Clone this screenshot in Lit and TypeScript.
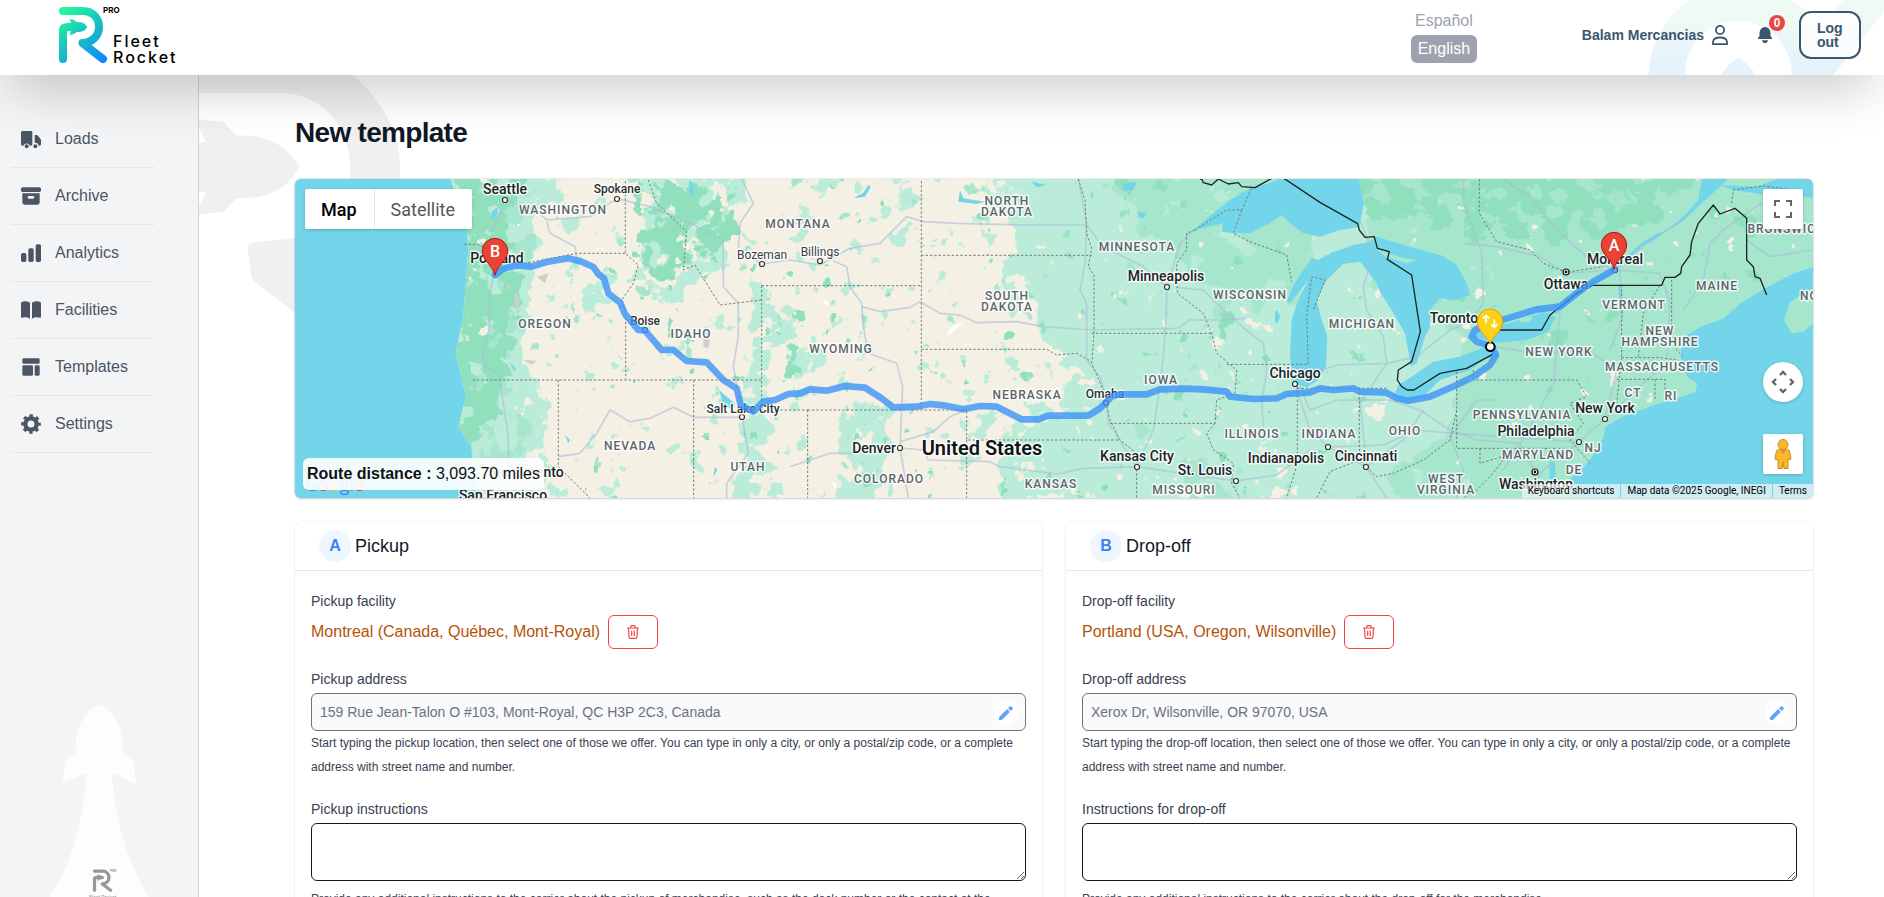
import { LitElement, html, css, svg } from "lit";
import { customElement, property } from "lit/decorators.js";

const logoMark = (fill: string) => svg`
  <g fill="none" stroke=${fill} stroke-width="24" stroke-linecap="round" stroke-linejoin="round">
    <path d="M189 33H248C280 33 297 56 297 81C297 109 274 129 247 129L309 177" />
    <path d="M189 177V90Q189 82 198 82H206" stroke-linecap="round" />
  </g>
  <path fill=${fill} d="M200 69H213L209 57L222 60L230 66C246 65 257 71 262 81C257 91 246 97 230 96L222 102L209 105L213 93H200Z" />`;

/* ---------- Map data: terrain units are thirds of a pixel ---------- */

type Label = [string, number, number, string];

const labels: Label[] = [
  ["Seattle", 645, 58, "city"],
  ["Spokane", 980, 57, "town"],
  ["WASHINGTON", 820, 120, "state"],
  ["Portland", 622, 265, "city"],
  ["OREGON", 765, 462, "state"],
  ["Boise", 1065, 453, "town"],
  ["IDAHO", 1203, 492, "state"],
  ["MONTANA", 1524, 162, "state"],
  ["Bozeman", 1416, 255, "minor"],
  ["Billings", 1590, 246, "minor"],
  ["WYOMING", 1652, 537, "state"],
  ["Salt Lake City", 1358, 717, "town"],
  ["NEVADA", 1019, 828, "state"],
  ["UTAH", 1373, 891, "state"],
  ["Sacramento", 707, 905, "city"],
  ["San Francisco", 640, 974, "city"],
  ["NORTH", 2150, 93, "state"],
  ["DAKOTA", 2150, 126, "state"],
  ["SOUTH", 2150, 378, "state"],
  ["DAKOTA", 2150, 411, "state"],
  ["NEBRASKA", 2212, 675, "state"],
  ["Denver", 1752, 834, "city"],
  ["COLORADO", 1797, 927, "state"],
  ["United States", 2075, 832, "country"],
  ["KANSAS", 2282, 942, "state"],
  ["MINNESOTA", 2541, 231, "state"],
  ["Minneapolis", 2628, 319, "city"],
  ["WISCONSIN", 2881, 375, "state"],
  ["IOWA", 2614, 630, "state"],
  ["Omaha", 2446, 671, "town"],
  ["Kansas City", 2541, 859, "city"],
  ["St. Louis", 2745, 901, "city"],
  ["MISSOURI", 2683, 960, "state"],
  ["ILLINOIS", 2887, 792, "state"],
  ["Chicago", 3015, 610, "city"],
  ["INDIANA", 3117, 792, "state"],
  ["Indianapolis", 2988, 865, "city"],
  ["MICHIGAN", 3215, 462, "state"],
  ["OHIO", 3344, 782, "state"],
  ["Cincinnati", 3229, 859, "city"],
  ["WEST", 3467, 927, "state"],
  ["VIRGINIA", 3467, 960, "state"],
  ["Toronto", 3491, 445, "city"],
  ["Ottawa", 3829, 343, "city"],
  ["Montreal", 3975, 268, "city"],
  ["NEW YORK", 3808, 546, "state"],
  ["VERMONT", 4032, 405, "state"],
  ["NEW", 4111, 483, "state"],
  ["HAMPSHIRE", 4110, 516, "state"],
  ["MASSACHUSETTS", 4117, 591, "state"],
  ["MAINE", 4280, 348, "state"],
  ["BRUNSWICK", 4487, 177, "state"],
  ["NOVA", 4585, 376, "state"],
  ["CT", 4028, 669, "state"],
  ["RI", 4142, 678, "state"],
  ["New York", 3945, 715, "city"],
  ["PENNSYLVANIA", 3697, 735, "state"],
  ["Philadelphia", 3739, 784, "city"],
  ["NJ", 3909, 834, "state"],
  ["MARYLAND", 3743, 855, "state"],
  ["DE", 3852, 900, "state"],
  ["Washington", 3737, 943, "city"],
];

const dots = [
  [645, 90], [980, 86], [1064, 479], [1416, 282], [1590, 273], [1357, 742], [1830, 834],
  [2631, 351], [2447, 698], [2541, 891], [2838, 933], [3015, 642], [3114, 831],
  [3228, 891], [3945, 747], [3867, 816], [3975, 300],
];
const capitals = [[3829, 307], [3736, 907]];

const fontSize: Record<string, number> = { city: 14, town: 12, minor: 12, state: 12, country: 20 };
const px = (v: number) => Math.round((v - 15) / 3);
const py = (v: number) => Math.round((v - 27) / 3);

const route =
  "M615 315L640 296L680 286L725 290L770 276L835 265L875 275L910 291L925 312L942 325L955 370L990 397L1005 432L1045 480L1065 482L1115 540L1150 540L1190 573L1250 577L1300 630L1340 655L1352 705L1390 725L1420 695L1455 690L1495 672L1530 670L1560 658L1610 662L1665 648L1725 653L1775 685L1810 712L1880 710L1920 702L1960 706L2020 718L2070 708L2120 710L2150 725L2195 748L2245 748L2275 737L2395 737L2430 715L2465 680L2490 673L2570 673L2610 658L2680 656L2740 658L2810 665L2820 680L2890 687L2960 685L2990 672L3060 667L3090 655L3130 660L3190 655L3210 665L3290 668L3320 685L3355 692L3420 680L3500 645L3550 620L3600 585L3618 555L3605 530L3560 515L3545 500L3555 480L3600 460L3660 443L3740 418L3810 410L3860 370L3910 335L3972 300";

const roads = [
  "M645 95L620 150L605 190L610 320L598 380L598 480L578 540L580 585L628 615L640 700L655 800L655 984",
  "M650 92L740 120L770 150L900 140L980 86L1080 110L1200 160L1300 210L1300 350L1345 400L1345 500L1330 590L1357 740L1375 850L1310 940L1310 984",
  "M770 155L780 190L855 230L860 265", "M1355 27L1390 100L1350 160L1345 240L1416 282L1500 270L1590 285L1680 235L1770 220L1850 140L1900 155L2000 160L2200 165L2390 165L2440 230L2560 290L2631 351",
  "M1630 273L1670 290L1680 350L1715 400L1720 470L1735 550L1820 580L1838 650L1830 834L1855 984",
  "M1715 410L1770 425L1860 412L1890 395L1950 430L2010 435L2060 458L2180 455L2260 470L2400 480L2660 475L2700 450L2800 450L2870 445",
  "M2365 27L2390 160L2385 280L2370 360L2390 400L2390 570L2430 620L2450 690L2455 760L2541 890L2640 905L2838 933L2960 915L3060 840",
  "M2631 355L2628 450L2620 560L2610 650L2590 780L2541 885", "M2660 352L2740 360L2800 420L2880 490L2920 520L2930 600L2915 700L2920 770",
  "M2640 320L2670 220L2710 180", "M805 860L870 850L920 790L960 720L1020 755L1080 745L1150 712L1210 742L1357 742",
  "M1830 834L1900 840L1915 870L2100 875L2130 890L2300 912L2380 895L2541 891", "M1500 890L1620 850L1690 850",
  "M1830 815L1930 785L1980 740L2040 715", "M3015 642L3060 780L3114 831L3228 891L3290 984", "M3114 831L3280 825L3380 780L3490 790L3640 800L3867 816",
  "M3030 650L3060 720L3140 690L3300 690L3390 720L3480 780L3560 810L3690 820L3736 907", "M3228 891L3340 810L3400 720",
  "M3210 150L3250 250L3220 350L3230 420L3280 500L3290 580L3210 700L3230 880", "M3080 605L3140 585L3290 580L3380 560L3480 480L3540 455",
  "M3540 455L3580 400L3575 250L3520 100L3520 27", "M3560 520L3700 545L3900 545L3980 600L3945 747", "M3990 300L3998 440L3960 540",
  "M3520 220L3620 230L3750 260L3829 310L3975 300", "M3975 300L4110 310L4140 400L4130 580L4060 640L3945 747L3867 816L3760 900L3700 984",
  "M3640 27L3720 80L3800 180L3900 270L3975 300L4080 210L4180 150", "M4180 420L4240 330L4260 220L4300 180L4400 110L4460 70",
  "M3810 420L3800 545L3790 640L3710 790L3640 900", "M3500 984L3520 900L3480 800L3560 690L3620 690",
  "M4370 210L4440 260L4569 240",
];

const stateLines = [
  "M523 223H565L680 285L860 250H1012", "M1006 33V250L1045 285L1030 340L995 390L1007 430V628", "M548 630H1415",
  "M805 630V890L900 984", "M1211 630V984", "M1415 347V720H1553M1415 347H1894", "M1553 720V984M1553 720H2030V810H2490M2030 810V984",
  "M1894 33V720", "M1894 256H2405", "M1894 538H2270L2300 555L2360 550L2405 575", "M1075 30L1100 100L1190 185L1180 300L1215 285L1290 405L1415 390",
  "M2365 27L2385 90L2390 190L2405 235L2395 290L2412 315V490L2405 580L2440 660L2460 750L2490 810L2540 850V984",
  "M2405 490H2770", "M2715 180L2690 190L2690 240L2660 280L2662 370L2740 430L2765 490L2780 550L2840 600L2835 670L2780 690L2775 760H2460",
  "M2715 180L2810 120H2855L2885 55", "M2855 120L2830 190L2880 215L2990 255L3005 335", "M2810 583H3055L3050 440L3065 320L3105 330L3070 420",
  "M2775 760L2750 790L2770 840L2830 880L2825 940L2850 984", "M3022 650V880L2990 984", "M3022 655H3290", "M3208 655V870L3120 905L3080 984",
  "M3500 605V835H3835", "M3500 720L3480 810L3400 870L3310 910L3260 920L3208 870", "M3550 600V630H3860L3890 680L3840 700L3880 760L3840 810L3900 880",
  "M3570 835V880L3700 840", "M3995 345V560L3980 700", "M3995 563H4110L4160 570", "M3980 628H4125V660M4095 628V690", "M4145 330V480L4160 540L4180 560M4045 560L4060 430L4110 345",
  "M3568 27V130L3620 215L3720 240L3760 280L3829 307L3940 290", "M4325 100L4330 60L4420 48L4510 60", "M3640 870L3600 920L3560 960L3520 984",
];

const border =
  "M2730 27H2735L2740 38L2765 45L2785 27L2815 42L2845 38L2855 50L2895 53L2965 14L3090 97L3203 161L3208 180L3225 202L3253 200L3262 235L3298 245L3292 268L3365 315L3391 485L3365 575L3325 600L3322 630L3335 650L3352 660H3372L3450 610L3530 595L3608 553M3630 480H3755L3780 435L3860 370L3905 346H4115L4125 322L4155 322L4172 310L4175 290L4200 255L4205 215L4225 160L4270 105L4290 132L4335 115L4370 145V270L4390 290L4395 320L4410 325L4430 375";

const westLand = "M483 27L500 90L530 170L536 230L528 330L520 440L497 550L512 610L528 680L505 770L545 830L548 920L580 984H3960L3840 984L3850 950L3840 925L3880 890L3905 860L3940 800L3945 770L3985 745L4050 715L4140 690L4215 665L4220 640L4190 620L4170 560L4180 500L4230 470L4300 445L4350 400L4430 350L4510 310L4569 290V27Z";

const lakes = [
  "M2710 180L2770 130L2820 90L2890 50L2940 40L2965 27H3205L3222 100L3208 170L3150 180L3090 200L3040 190L3000 160L2975 135L2940 160L2880 190L2830 190L2795 185L2800 160Z",
  "M2975 135L3000 105L2960 140L2930 155Z",
  "M3085 270L3065 265L3010 345L2990 395L3000 400L3055 330L3025 390L3005 450L3000 560L3010 640L3050 652L3085 630L3108 590L3112 500L3092 440L3080 390L3110 330L3160 282L3210 275L3258 335L3272 370L3308 425L3345 490L3358 560L3362 590L3380 580L3405 500L3420 470V420L3450 385L3490 392L3540 375L3530 340L3500 285L3460 258L3360 230L3260 200L3240 215L3190 225L3120 250Z",
  "M2955 425L2962 420L2970 440L2962 460L2955 455Z",
  "M3310 680L3325 645L3365 620L3430 575L3510 560L3600 525L3622 540L3540 600L3450 630L3400 680L3345 698Z",
  "M3548 500L3575 470L3660 460L3760 425L3795 440L3775 485L3710 510L3620 518Z",
  "M4140 175L4190 130L4225 90L4235 27H4315L4240 95L4180 152L4120 190L4080 220L4065 215Z",
  "M4285 45L4400 50L4460 27H4569V85L4510 72L4430 75L4340 62Z",
  "M3985 350L3992 340L3998 420L3990 430Z", "M3778 870L3795 880L3800 984H3780Z",
  "M1287 660L1310 680L1335 700L1330 720L1300 705Z", "M1198 30L1212 50L1208 80L1198 70Z", "M605 125L625 110L618 140L605 150Z",
  "M1735 45L1742 50L1725 80L1690 85L1720 68Z", "M2010 60L2020 85L2085 95L2060 102L2005 95Z", "M2545 125L2570 130L2560 145L2545 140Z",
  "M2500 40L2540 35L2530 60L2500 62Z", "M2225 35L2270 45L2240 52Z", "M825 795L840 810L835 820Z", "M660 575L680 600L670 602Z", "M1275 890L1282 900L1270 920Z", "M1360 780L1368 790L1362 805Z",
];

@customElement("route-map")
export class RouteMap extends LitElement {
  @property() distance = "";

  static styles = css`
    :host { display: block; position: relative; height: 319px; overflow: hidden; border-radius: 6px; background: #72d5ea;
      box-shadow: 0 0 0 1px #0000000f, 0 1px 3px #00000026; font-family: Roboto, sans-serif; }
    svg { display: block; }
    .terrain, .names { position: absolute; inset: 0; width: 100%; height: 100%; }
    .names text { text-anchor: middle; paint-order: stroke; stroke: #ffffffcc; stroke-width: 3px; stroke-linejoin: round; }
    .city { font-size: 14px; font-weight: 500; fill: #202427; }
    .town { font-size: 12px; font-weight: 500; fill: #2c3134; }
    .minor { font-size: 12px; fill: #3a3f42; }
    .state { font-size: 12px; font-weight: 500; fill: #5c656b; letter-spacing: 1px; }
    .country { font-size: 20px; font-weight: 600; fill: #111416; }
    .names .letter { font-size: 16px; font-weight: 500; fill: #fff; stroke: none; }
    button { font-family: inherit; border: 0; padding: 0; margin: 0; background: #fff; cursor: pointer; }
    .types { position: absolute; left: 10px; top: 10px; display: flex; height: 40px; border-radius: 2px; overflow: hidden; box-shadow: 0 1px 4px -1px #0000004d; }
    .types button { font-size: 18px; padding: 0 17px 0 16px; color: #565656; }
    .types .on { color: #000; font-weight: 500; border-right: 1px solid #e6e6e6; }
    .square, .pan, .pegman { position: absolute; right: 10px; width: 40px; height: 40px; display: grid; place-items: center; box-shadow: 0 1px 4px -1px #0000004d; border-radius: 2px; }
    .square { top: 10px; }
    .pan { bottom: 96px; border-radius: 50%; }
    .pegman { bottom: 24px; }
    .google { position: absolute; left: 10px; bottom: 4px; font: 500 18px/20px "Open Sans", sans-serif; }
    .blue { color: #4285f4; } .red { color: #ea4335; } .gold { color: #fbbc05; } .green { color: #34a853; }
    .distance { position: absolute; left: 8px; bottom: 8px; padding: 4px; border-radius: 6px; background: #ffffffe6; color: #111; font: 16px/24px "Liberation Sans", Arial, sans-serif; white-space: nowrap; }
    .legal { position: absolute; right: 0; bottom: 0; display: flex; gap: 1px; font-size: 10px; line-height: 14px; color: #000; }
    .legal > * { background: #f5f5f5b3; padding: 0 6px; color: inherit; font-size: 10px; line-height: 14px; text-decoration: none; }
  `;

  private patch(id: string, color: string, freq: number, seed: number, soft: number) {
    return svg`<filter id=${id} filterUnits="userSpaceOnUse" x="0" y="0" width="4600" height="1000" color-interpolation-filters="sRGB">
      <feGaussianBlur in="SourceAlpha" stdDeviation=${soft} result="d" />
      <feTurbulence type="fractalNoise" baseFrequency=${freq} numOctaves="4" seed=${seed} result="n" />
      <feComposite in="d" in2="n" operator="arithmetic" k1="0" k2="0.5" k3="0.9" k4="-0.2" />
      <feComponentTransfer result="m"><feFuncA type="linear" slope="24" intercept="-11.5" /></feComponentTransfer>
      <feFlood flood-color=${color} />
      <feComposite operator="in" in2="m" />
    </filter>`;
  }

  render() {
    return html`
      <svg class="terrain" viewBox="15 27 4554 957" preserveAspectRatio="xMidYMid slice" aria-hidden="true">
        <defs>
          <clipPath id="land"><path d=${westLand} /></clipPath>
          ${this.patch("light", "#bbecd9", 0.016, 4, 20)}
          ${this.patch("mid", "#a6e6cd", 0.012, 11, 25)}
          ${this.patch("dark", "#90e0bd", 0.017, 21, 20)}
          ${this.patch("sand", "#f5f0e4", 0.02, 33, 20)}
        </defs>
        <path d=${westLand} fill="#f5f0e4" />
        <g clip-path="url(#land)">
          <g filter="url(#light)">
            <path fill-opacity=".14" d="M0 0H4600V1000H0Z" />
            <path d="M400 0H740L710 400L720 620L760 700L760 1000H400Z" fill-opacity=".9" />
            <path d="M1040 0H1370L1330 260L1230 330L1100 420L1040 300Z" fill-opacity=".6" />
            <path d="M740 30L900 60L820 130L740 100ZM860 280H990V420L860 390ZM1400 330L1530 420L1640 620L1500 600L1400 560Z" fill-opacity=".5" />
            <path d="M1340 560H1440V1000H1330ZM1650 700H1800L1790 1000H1660Z" fill-opacity=".6" />
            <path d="M1500 0H1900V220H1500Z" fill-opacity=".2" />
            <path d="M1900 0H2150L2120 320L2250 480L2350 620L2250 700L2000 740V1000L2060 950L2200 850L2400 800V0Z" fill-opacity=".35" />
            <path d="M2110 0H2500V1000H2200L2300 800L2420 640L2260 500L2200 300Z" />
            <path d="M2120 1000L2150 760L2500 760V1000Z" fill-opacity=".5" />
          </g>
          <path d="M2180 0H4600V1000H2420L2410 640L2300 520L2250 330Z" fill="#bbecd9" />
          <path d="M3660 0H4600V1000H3640L3560 640L3630 480Z" fill="#a6e6cd" />
          <g filter="url(#mid)">
            <path d="M2480 0H3060V400L2900 420L2750 400L2650 280L2500 160Z" fill-opacity=".8" />
            <path d="M3200 0H4600V1000H3500L3480 860L3500 600L3560 500L3250 380Z" />
            <path d="M2650 900H2850V1000H2640ZM3330 850L3520 780V1000H3250Z" fill-opacity=".7" />
            <path d="M540 0H720V1000H560Z" fill-opacity=".4" />
          </g>
          <g filter="url(#dark)">
            <path d="M480 0H720L660 130L690 300L670 620L560 800L600 1000H500L470 560L500 300Z" fill-opacity=".7" />
            <path d="M1040 30H1280L1380 180L1230 260L1060 400Z" fill-opacity=".65" />
            <path d="M1480 400H1560V640H1480ZM1690 730H1770V960H1690Z" fill-opacity=".35" />
            <path d="M3200 0H4250L4100 150L3900 230L3600 200L3400 170L3200 150Z" fill-opacity=".62" />
            <path d="M3700 430H3840V540H3700ZM4280 110H4400V230H4280ZM2500 0H2640V100H2500ZM2780 400H2860V510H2780Z" fill-opacity=".4" />
          </g>
          <g filter="url(#sand)">
            <path d="M2560 940H2900V800H3000V984H2560ZM3200 680L3300 670V760H3200ZM2740 500H2800V700H2740Z" fill-opacity=".38" />
            <path d="M3340 600H3400V625H3330ZM2870 400H2900V480H2860Z" fill-opacity=".5" />
            <path d="M750 440H1000V600H750ZM830 650H1190V800H830ZM1720 440H1880V650H1720Z" fill-opacity=".6" />
          </g>
          <g fill="#cfd0c9"><path d="M675 370L690 390L680 430L672 400ZM1240 500L1260 510L1255 535L1240 530ZM740 320L775 310L765 340ZM700 570L740 572L725 585ZM655 340L665 355L650 360Z" /></g>
          <path fill="#fff" d="M1970 490L1990 465L2020 455L2000 475L1975 497ZM1595 395L1610 390L1620 410ZM680 160L692 165L684 170ZM1620 930L1640 945L1635 955Z" />
        </g>
        <path fill="#a6e6cd" d="M4569 355L4500 395L4482 450L4505 490L4540 485L4569 460Z" />
        <g fill="#72d5ea">${lakes.map((d) => svg`<path d=${d} />`)}</g>
        <path d="M3795 430L3900 345L3972 300L4060 220L4110 190" fill="none" stroke="#72d5ea" stroke-width="8" />
        <path fill="#a6e6cd" d="M3255 235L3330 262L3380 270L3350 280L3290 262ZM3690 445L3730 440L3720 455L3690 458Z" />
        <path fill="#a6e6cd" d="M4000 728L4110 690L4070 715L4010 735Z" />
        <g fill="none" stroke="#a8bcd6" stroke-opacity=".6" stroke-width="5" stroke-linejoin="round">${roads.map((d) => svg`<path d=${d} />`)}</g>
        <g fill="none" stroke="#6f7b78" stroke-width="3" stroke-dasharray="7 6">${stateLines.map((d) => svg`<path d=${d} />`)}</g>
        <path d=${border} fill="none" stroke="#1d2426" stroke-width="4" stroke-linejoin="round" />
      </svg>
      <svg class="names" viewBox="0 0 1518 319" preserveAspectRatio="xMidYMid slice">
        ${dots.map(([x, y]) => svg`<circle cx=${px(x)} cy=${py(y)} r="2.5" fill="#fff" stroke="#333" stroke-width="1.2" />`)}
        ${capitals.map(([x, y]) => svg`<circle cx=${px(x)} cy=${py(y)} r="3" fill="#fff" stroke="#111" stroke-width="1.2" /><circle cx=${px(x)} cy=${py(y)} r="1.4" fill="#111" />`)}
        ${labels.map(([t, x, y, c]) => svg`<text class=${c} x=${px(x)} y=${py(y + fontSize[c] * 1.08)}>${t}</text>`)}
        <g transform="scale(.33333) translate(-15 -27)">
          <path d=${route} fill="none" stroke="#3c93f8" stroke-opacity=".8" stroke-width="20" stroke-linejoin="round" stroke-linecap="round" />
          <circle cx="3601" cy="530" r="13" fill="#fff" stroke="#000" stroke-width="6" />
          <path d="M615 316C608 285 577 272 577 243A38 38 0 0 1 653 243C653 272 622 285 615 316Z" fill="#ea4335" stroke="#b31412" stroke-width="3" />
          <path d="M3972 298C3965 267 3934 254 3934 225A38 38 0 0 1 4010 225C4010 254 3979 267 3972 298Z" fill="#ea4335" stroke="#b31412" stroke-width="3" />
          <path d="M3600 522C3593 497 3562 484 3562 455A38 38 0 0 1 3638 455C3638 484 3607 497 3600 522Z" fill="#fcd116" stroke="#f29900" stroke-width="3" />
          <path d="M3588 460V438M3578 446L3588 436L3598 446M3613 448V470M3603 462L3613 472L3623 462" fill="none" stroke="#fff" stroke-width="5" />
        </g>
        <text class="letter" x="200" y="78">B</text>
        <text class="letter" x="1319" y="72">A</text>
      </svg>
      <div class="google" aria-label="Google"><span class="blue">G</span><span class="red">o</span><span class="gold">o</span><span class="blue">g</span><span class="green">l</span><span class="red">e</span></div>
      <div class="types"><button class="on" type="button">Map</button><button type="button">Satellite</button></div>
      <button class="square" type="button" aria-label="Toggle fullscreen view">
        <svg width="18" height="18" viewBox="0 0 18 18" fill="none" stroke="#666" stroke-width="2"><path d="M1 6V1H6M12 1H17V6M17 12V17H12M6 17H1V12" /></svg>
      </button>
      <button class="pan" type="button" aria-label="Map camera controls">
        <svg width="24" height="24" viewBox="0 0 24 24" fill="none" stroke="#666" stroke-width="2.400"><path d="M9 5L12 2L15 5M9 19L12 22L15 19M5 9L2 12L5 15M19 9L22 12L19 15" /></svg>
      </button>
      <button class="pegman" type="button" aria-label="Drag Pegman onto the map to open Street View">
        <svg width="18" height="30" viewBox="0 0 18 30" fill="#fbb829" stroke="#c78a2c" stroke-width="1"><path d="M5 10H13Q16 11 16 14L17 20L14 21V29.500H10L9 23L8 29.500H4V21L1 20L2 14Q2 11 5 10Z" /><path d="M6 11L9 15L12 11Z" fill="#e8893a" stroke="none" /><circle cx="9" cy="5.500" r="5" /></svg>
      </button>
      <div class="distance"><b>Route distance :</b> ${this.distance}</div>
      <div class="legal"><button type="button">Keyboard shortcuts</button><span>Map data ©2025 Google, INEGI</span><a href="#terms">Terms</a></div>
    `;
  }
}

@customElement("stop-card")
export class StopCard extends LitElement {
  @property() letter = "";
  @property() heading = "";
  @property() facilityLabel = "";
  @property() facility = "";
  @property() addressLabel = "";
  @property() address = "";
  @property() addressHint = "";
  @property() notesLabel = "";
  @property() notesHint = "";

  static styles = css`
    :host { display: block; border-radius: 8px; background: #fff; box-shadow: 0 0 0 1px #00000008, 0 1px 3px #00000014; color: #374151; font-size: 14px; line-height: 20px; }
    * { box-sizing: border-box; }
    header { display: flex; align-items: center; gap: 4px; padding: 8px 24px; border-bottom: 1px solid #e5e7eb; }
    .badge { width: 32px; height: 32px; border-radius: 50%; background: #eff6ff; color: #3b82f6; display: grid; place-items: center; font-size: 16px; font-weight: 700; }
    h2 { margin: 0; font-size: 18px; line-height: 28px; font-weight: 400; color: #111827; }
    .body { display: flex; flex-direction: column; gap: 20px; padding: 20px 16px; }
    .field { display: flex; flex-direction: column; }
    .name { margin-bottom: 4px; }
    .facility { display: flex; align-items: center; gap: 8px; }
    .facility a { color: #b45309; font-size: 16px; line-height: 24px; text-decoration: none; }
    .remove { width: 50px; height: 34px; border: 1px solid #ef4444; border-radius: 6px; background: #fff; color: #ef4444; display: grid; place-items: center; padding: 0; }
    .box { position: relative; }
    input { display: block; width: 100%; height: 38px; border: 1px solid #6b7280; border-radius: 6px; background: #f9fafb; color: #6b7280; font: inherit; padding: 0 40px 0 8px; }
    .edit { position: absolute; right: 8px; top: 8px; width: 24px; height: 24px; border: 0; border-radius: 50%; background: #fff; padding: 0; display: grid; place-items: center; color: #60a5fa; }
    .hint { margin: 0; font-size: 12px; line-height: 24px; }
    textarea { display: block; width: 100%; height: 58px; border: 1px solid #111827; border-radius: 6px; background: #fff; font: inherit; padding: 8px; margin-bottom: 6px; resize: vertical; }
  `;

  render() {
    return html`
      <header><span class="badge">${this.letter}</span><h2>${this.heading}</h2></header>
      <div class="body">
        <div class="field">
          <span class="name">${this.facilityLabel}</span>
          <div class="facility">
            <a href="#facility">${this.facility}</a>
            <button class="remove" type="button" aria-label="Remove facility">
              <svg width="12" height="14" viewBox="0 0 12 14" fill="none" stroke="currentColor" stroke-width="1.2" stroke-linecap="round" stroke-linejoin="round"><path d="M.6 3H11.400M1.500 3L2.100 12Q2.200 13.400 3.500 13.400H8.500Q9.800 13.400 9.900 12L10.500 3M3.800 2.800V1.600Q3.800.6 4.800.6H7.200Q8.200.6 8.200 1.600V2.800M4.700 6V10.500M7.300 6V10.500" /></svg>
            </button>
          </div>
        </div>
        <div class="field">
          <label class="name" for="address">${this.addressLabel}</label>
          <div class="box">
            <input id="address" type="text" .value=${this.address} readonly />
            <button class="edit" type="button" aria-label="Edit address">
              <svg width="14" height="14" viewBox="0 0 14 14" fill="currentColor"><path d="M0 11.200V14H2.800L10.900 5.900L8.100 3.100ZM9 2.200L11.800 5L13.600 3.200Q14.300 2.500 13.600 1.800L12.200.4Q11.500-.3 10.800.4Z" /></svg>
            </button>
          </div>
          <p class="hint">${this.addressHint}</p>
        </div>
        <div class="field">
          <label class="name" for="notes">${this.notesLabel}</label>
          <textarea id="notes"></textarea>
          <p class="hint">${this.notesHint}</p>
        </div>
      </div>
    `;
  }
}

const menu = [
  { name: "Loads", icon: svg`<path d="M4 6H30Q34 6 34 10V46Q34 50 30 50H27A11 11 0 0 0 7 50H4Q0 50 0 46V10Q0 6 4 6ZM41 18H46Q49 18 51 20L58 29Q60 31 60 34V46Q60 50 56 50H53A11 11 0 0 0 41 41Z" /><circle cx="17" cy="52" r="6" /><circle cx="43" cy="52" r="6" />` },
  { name: "Archive", icon: svg`<rect y="4" width="60" height="14" rx="5" /><path fill-rule="evenodd" d="M4 22H56V48Q56 56 48 56H12Q4 56 4 48ZM24 30A4 4 0 0 0 24 38H36A4 4 0 0 0 36 30Z" />` },
  { name: "Analytics", icon: svg`<rect y="30" width="16" height="27" rx="5" /><rect x="22" y="16" width="16" height="41" rx="5" /><rect x="44" y="4" width="16" height="53" rx="5" />` },
  { name: "Facilities", icon: svg`<path d="M0 9Q0 6 4 5Q16 2 27 8V56Q16 49 3 53Q0 54 0 50ZM60 9Q60 6 56 5Q44 2 33 8V56Q44 49 57 53Q60 54 60 50Z" />` },
  { name: "Templates", icon: svg`<rect x="4" y="4" width="52" height="16" rx="4" /><rect x="4" y="25" width="32" height="31" rx="4" /><rect x="41" y="25" width="15" height="31" rx="4" />` },
  { name: "Settings", icon: svg`<circle cx="30" cy="30" r="17" fill="none" stroke="currentColor" stroke-width="13" /><circle cx="30" cy="30" r="25" fill="none" stroke="currentColor" stroke-width="9" stroke-dasharray="10 9.630" stroke-dashoffset="5" />` },
];

@customElement("app-root")
export class AppRoot extends LitElement {
  static styles = css`
    :host { display: grid; grid-template: 75px 1fr / 199px minmax(0, 1fr); height: 100vh; overflow: hidden; background: #fff; color: #111827; font-family: "Liberation Sans", Arial, sans-serif; }
    * { box-sizing: border-box; }
    svg { display: block; }
    .top { grid-column: 1 / -1; position: relative; z-index: 2; display: flex; align-items: center; padding: 0 23px 5px 59px; background: #fff; color: #3b566e; box-shadow: 0 25px 50px -12px #00000038; }
    .deco { position: absolute; right: 0; bottom: 0; }
    .brand { margin-right: auto; }
    .brand svg { overflow: visible; }
    .pro { font: 700 8px Inter, sans-serif; }
    .word { font: 500 16px Inter, sans-serif; letter-spacing: 2px; }
    .langs { display: flex; flex-direction: column; align-items: center; margin-right: 102px; }
    .langs a { padding: 4px 7px; line-height: 20px; font-size: 16px; color: #9ca3af; text-decoration: none; border-radius: 6px; }
    .langs .on { background: #9ca3af; color: #fff; }
    .user { position: relative; display: flex; align-items: center; gap: 8px; font-size: 14px; font-weight: 700; color: inherit; text-decoration: none; margin-right: 30px; }
    .bell { position: relative; border: 0; background: none; padding: 0; color: inherit; margin-right: 27px; }
    .count { position: absolute; left: 11px; top: -12px; width: 16px; height: 16px; border-radius: 50%; background: #ef4444; color: #fff; font: 700 12px/16px "Liberation Sans", Arial, sans-serif; text-align: center; }
    .logout { position: relative; width: 62px; height: 48px; border: 2px solid #3b566e; border-radius: 12px; background: #ffffffb3; padding: 0 16px; font: 700 14px/14px "Liberation Sans", Arial, sans-serif; color: inherit; text-align: left; }
    .side { display: flex; flex-direction: column; justify-content: space-between; background: #f3f4f6; border-right: 1px solid #cbd2d9; padding: 36px 0 0 11px; min-height: 0; }
    ul { list-style: none; margin: 0; padding: 0; width: 144px; }
    li { border-bottom: 1px solid #e5e7eb; }
    li a { display: flex; align-items: center; gap: 14px; height: 56px; padding-left: 10px; color: #4b5563; text-decoration: none; font-size: 16px; }
    .launch { margin-left: 36px; flex: none; }
    .tiny { font: 700 3px Inter, sans-serif; }
    .small { font: 400 5px Lato, sans-serif; }
    .main { position: relative; padding: 40px 71px 0 96px; min-width: 0; min-height: 0; overflow: hidden; }
    .mark { position: absolute; left: 0; top: 0; }
    .content { position: relative; }
    h1 { margin: 0 0 28px; font-size: 28px; line-height: 36px; font-weight: 700; letter-spacing: -0.025em; }
    .cards { display: grid; grid-template-columns: 1fr 1fr; gap: 24px; margin-top: 24px; }
  `;

  render() {
    return html`
      <header class="top">
        <svg class="deco" width="242" height="75" viewBox="842 0 726 225" aria-hidden="true">
          <defs><linearGradient id="sky" x1="0" y1="0" x2="0" y2="225" gradientUnits="userSpaceOnUse"><stop offset=".3" stop-color="#f0faf4" /><stop offset=".8" stop-color="#e5f3fb" /></linearGradient></defs>
          <path fill="url(#sky)" fill-rule="evenodd" d="M862 225C865 130 910 50 985 0H1290Q1340 30 1374 75L1450 0H1568V35L1416 225H1291C1290 130 1220 63 1131 63C1040 63 972 130 971 225Z" />
          <path fill="url(#sky)" d="M1079 225Q1100 190 1131 173Q1162 190 1184 225Z" />
        </svg>
        <a class="brand" href="#home" aria-label="Fleet Rocket Pro">
          <svg width="124" height="58" viewBox="0 0 124 58">
            <defs><linearGradient id="brand" x1="177" y1="20" x2="320" y2="190" gradientUnits="userSpaceOnUse"><stop offset=".1" stop-color="#24f59c" /><stop offset=".55" stop-color="#17b9cc" /><stop offset="1" stop-color="#0a84ff" /></linearGradient></defs>
            <g transform="scale(.33333) translate(-177 -18)">${logoMark("url(#brand)")}</g>
            <text class="pro" x="44" y="7">PRO</text>
            <text class="word" x="54" y="41">Fleet</text>
            <text class="word" x="54" y="57">Rocket</text>
          </svg>
        </a>
        <nav class="langs" aria-label="Language"><a href="#es">Español</a><a class="on" href="#en">English</a></nav>
        <a class="user" href="#profile">Balam Mercancias
          <svg width="16" height="20" viewBox="0 0 16 20" fill="none" stroke="currentColor" stroke-width="1.800"><circle cx="8" cy="5" r="4.100" /><path d="M1 19.100V17Q1.500 12.500 8 12.500T15 17V19.100Z" /></svg>
        </a>
        <button class="bell" type="button" aria-label="Notifications">
          <svg width="14" height="16" viewBox="0 0 14 16" fill="currentColor"><path d="M7 0Q12 .5 12.500 6V9L14 11V12H0V11L1.500 9V6Q2 .5 7 0ZM4 13.200H10Q9.500 16 7 16T4 13.200Z" /></svg>
          <span class="count">0</span>
        </button>
        <button class="logout" type="button">Log out</button>
      </header>
      <aside class="side">
        <nav><ul>${menu.map((m) => html`<li><a href="#${m.name.toLowerCase()}"><svg width="20" height="20" viewBox="0 0 60 60" fill="currentColor" aria-hidden="true">${m.icon}</svg>${m.name}</a></li>`)}</ul></nav>
        <svg class="launch" width="106" height="193" viewBox="141 72 318 579" aria-hidden="true">
          <path fill="#fdfdfd" d="M298 71C340 95 370 135 369 215L402 246L408 311L354 286L336 285C345 400 375 540 450 655H145C215 560 250 420 260 285L240 286L188 311L194 246L227 215C225 135 255 95 298 71Z" />
          <g transform="translate(208 560) scale(.4)">${logoMark("#979797")}</g>
          <g transform="scale(3)" fill="#979797"><text class="tiny" x="110" y="192">PRO</text><text class="small" x="89" y="219">Fleet Rocket</text></g>
        </svg>
      </aside>
      <main class="main">
        <svg class="mark" width="220" height="260" viewBox="597 225 660 780" fill="#f0f0f0" aria-hidden="true">
          <path d="M597 225H1055C1150 300 1200 400 1200 505C1200 700 1100 800 1000 860L885 940L765 845Q754 838 753 820L749 785L743 745Q742 730 770 726L885 715C1000 700 1050 600 1050 500C1048 370 960 279 840 279H597Z" />
          <path d="M597 358L670 366L710 407C800 402 860 435 898 500C860 570 800 598 710 594L670 636L597 643V620L618 576H597V427H618L597 383Z" />
        </svg>
        <div class="content">
          <h1>New template</h1>
          <route-map distance="3,093.70 miles"></route-map>
          <div class="cards">
            <stop-card letter="A" heading="Pickup" facilityLabel="Pickup facility" facility="Montreal (Canada, Québec, Mont-Royal)"
              addressLabel="Pickup address" address="159 Rue Jean-Talon O #103, Mont-Royal, QC H3P 2C3, Canada"
              addressHint="Start typing the pickup location, then select one of those we offer. You can type in only a city, or only a postal/zip code, or a complete address with street name and number."
              notesLabel="Pickup instructions"
              notesHint="Provide any additional instructions to the carrier about the pickup of merchandise, such as the dock number or the contact at the facility."></stop-card>
            <stop-card letter="B" heading="Drop-off" facilityLabel="Drop-off facility" facility="Portland (USA, Oregon, Wilsonville)"
              addressLabel="Drop-off address" address="Xerox Dr, Wilsonville, OR 97070, USA"
              addressHint="Start typing the drop-off location, then select one of those we offer. You can type in only a city, or only a postal/zip code, or a complete address with street name and number."
              notesLabel="Instructions for drop-off"
              notesHint="Provide any additional instructions to the carrier about the drop-off for the merchandise."></stop-card>
          </div>
        </div>
      </main>
    `;
  }
}
